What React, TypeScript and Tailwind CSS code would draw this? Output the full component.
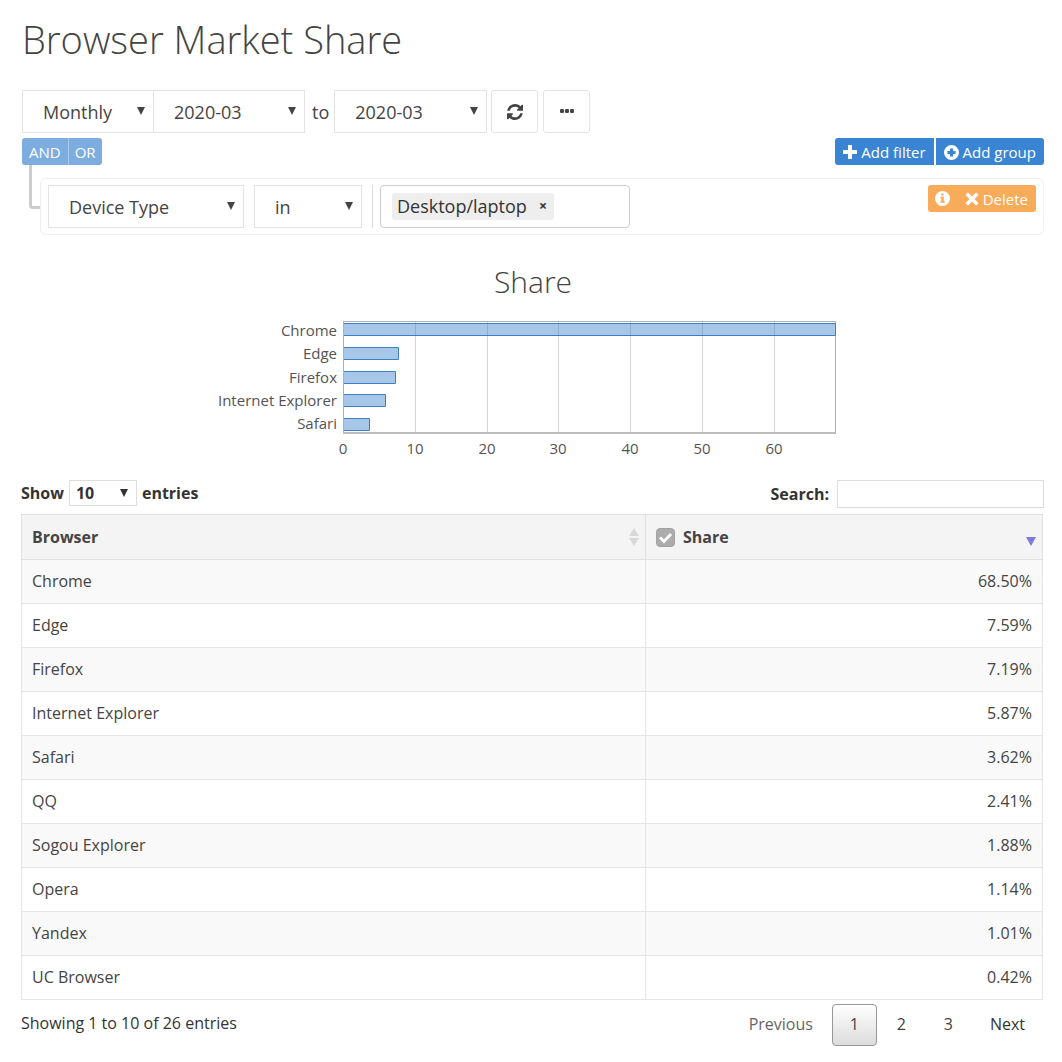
import { useState, type ReactNode } from 'react';

interface BrowserRow {
  name: string;
  share: number;
}

const ROWS: BrowserRow[] = [
  { name: 'Chrome', share: 68.5 },
  { name: 'Edge', share: 7.59 },
  { name: 'Firefox', share: 7.19 },
  { name: 'Internet Explorer', share: 5.87 },
  { name: 'Safari', share: 3.62 },
  { name: 'QQ', share: 2.41 },
  { name: 'Sogou Explorer', share: 1.88 },
  { name: 'Opera', share: 1.14 },
  { name: 'Yandex', share: 1.01 },
  { name: 'UC Browser', share: 0.42 },
];

function RefreshIcon() {
  return (
    <svg viewBox="0 0 1536 1536" className="size-4 fill-current" aria-hidden="true">
      <path d="M1511 928q0 5-1 7-64 268-268 434.5t-478 166.5q-146 0-282.5-55t-243.5-157l-129 129q-19 19-45 19t-45-19-19-45v-448q0-26 19-45t45-19h448q26 0 45 19t19 45-19 45l-137 137q71 66 161 102t187 36q134 0 250-65t186-179q11-17 53-117 8-23 30-23h192q13 0 22.5 9.5t9.5 22.5zm25-800v448q0 26-19 45t-45 19h-448q-26 0-45-19t-19-45 19-45l138-138q-148-137-349-137-134 0-250 65t-186 179q-11 17-53 117-8 23-30 23h-199q-13 0-22.5-9.5t-9.5-22.5v-7q65-268 270-434.5t480-166.5q146 0 284 55.5t245 156.5l130-129q19-19 45-19t45 19 19 45z" />
    </svg>
  );
}

function DotsIcon() {
  return (
    <svg viewBox="0 0 14 6" className="h-1.5 w-3.5 fill-current" aria-hidden="true">
      <rect x="0" y="0" width="4" height="4" rx="1.2" />
      <rect x="5" y="0" width="4" height="4" rx="1.2" />
      <rect x="10" y="0" width="4" height="4" rx="1.2" />
    </svg>
  );
}

function PlusIcon() {
  return (
    <svg viewBox="0 0 14 14" className="size-3.5 fill-current" aria-hidden="true">
      <path d="M5.5 0h3q.5 0 .5.5V5h4.500q.5 0 .5.5v3q0 .5-.5.5H9v4.500q0 .5-.5.5h-3q-.5 0-.5-.5V9H.5Q0 9 0 8.500v-3Q0 5 .5 5H5V.5Q5 0 5.500 0z" />
    </svg>
  );
}

function PlusCircleIcon() {
  return (
    <svg viewBox="0 0 15 15" className="size-[15px] fill-current" aria-hidden="true">
      <path
        fillRule="evenodd"
        d="M7.500 0a7.500 7.500 0 1 1 0 15a7.500 7.500 0 0 1 0-15zM6 3.500V6H3.500v3H6v2.500h3V9h2.500V6H9V3.500z"
      />
    </svg>
  );
}

function InfoIcon() {
  return (
    <svg viewBox="0 0 15 15" className="size-[15px] fill-current" aria-hidden="true">
      <path
        fillRule="evenodd"
        d="M7.500 0a7.500 7.500 0 1 1 0 15a7.500 7.500 0 0 1 0-15zM6.200 2.500v2h2.400v-2zM5.200 5.800v1h1v3.700h-1v1.300h4.600v-1.300h-1V5.800z"
      />
    </svg>
  );
}

function CrossIcon() {
  return (
    <svg viewBox="0 0 14 14" className="size-3.5 fill-current" aria-hidden="true">
      <path d="M3.300.8 7 4.500 10.700.8q.4-.4.800 0l1.700 1.700q.4.400 0 .8L9.500 7l3.700 3.700q.4.400 0 .8l-1.700 1.700q-.4.400-.8 0L7 9.500l-3.700 3.700q-.4.400-.8 0L.8 11.500q-.4-.4 0-.8L4.500 7 .8 3.300q-.4-.4 0-.8L2.500.8q.4-.4.800 0z" />
    </svg>
  );
}

function SelectBox({
  label,
  value,
  className,
}: {
  label: string;
  value: string;
  className: string;
}) {
  return (
    <div className={`relative h-[43px] ${className}`}>
      <select
        aria-label={label}
        defaultValue={value}
        className="h-full w-full appearance-none border border-[#e3e3e3] bg-white pl-5 pr-6 text-lg text-[#444]"
      >
        <option>{value}</option>
      </select>
      <svg
        viewBox="0 0 8 8"
        className="pointer-events-none absolute right-[9px] top-[17px] size-2 fill-[#444]"
        aria-hidden="true"
      >
        <path d="M0 0h8L4 8z" />
      </svg>
    </div>
  );
}

function IconButton({ label, children }: { label: string; children: ReactNode }) {
  return (
    <button
      type="button"
      aria-label={label}
      className="flex h-[43px] w-[47px] items-center justify-center rounded-[3px] border border-[#e3e3e3] bg-white text-[#444]"
    >
      {children}
    </button>
  );
}

// Plot geometry in svg units, axis starts at PLOT_X
const PLOT_X = 123;
const PLOT_W = 492;
const PLOT_H = 111;
const MAX = 68.5;
const TICKS = [0, 10, 20, 30, 40, 50, 60];

function ShareChart() {
  const scale = (v: number) => PLOT_X + Math.round((v / MAX) * PLOT_W);

  return (
    <svg
      viewBox="0 0 626 144"
      className="h-36 w-[626px] max-w-full overflow-visible"
      role="img"
      aria-label="Share by browser"
    >
      {TICKS.slice(1).map((t) => (
        <rect key={t} x={scale(t)} y={2} width={1} height={PLOT_H} fill="#d4d4d4" />
      ))}
      <rect x={PLOT_X + 0.5} y={1.5} width={PLOT_W} height={PLOT_H} fill="none" stroke="#b0b0b0" />
      <rect x={PLOT_X} y={112} width={PLOT_W + 1} height={2} fill="#bdbdbd" />
      {ROWS.slice(0, 5).map((row, i) => {
        const y = Math.round(4.4 + i * 23.6);
        const right = scale(row.share);
        return (
          <g key={row.name}>
            <rect x={PLOT_X + 1} y={y} width={right - PLOT_X} height={11} fill="#3b83cd" fillOpacity={0.45} />
            <path
              d={`M${PLOT_X + 1} ${y - 0.5}H${right + 0.5}V${y + 11.5}H${PLOT_X + 1}`}
              fill="none"
              stroke="#3f80c4"
              strokeWidth={1}
            />
            <text x={117} y={16 + Math.round(i * 23.25)} textAnchor="end" fontSize={15} fill="#545454">
              {row.name}
            </text>
          </g>
        );
      })}
      {TICKS.map((t) => (
        <text key={t} x={scale(t)} y={134} textAnchor="middle" fontSize={15} fill="#545454">
          {t}
        </text>
      ))}
    </svg>
  );
}

export default function App() {
  const [page, setPage] = useState(1);

  return (
    <main className="min-h-screen bg-white pl-[22px] pr-[18px] pt-3 font-['Open_Sans',sans-serif] text-base text-[#444]">
      <h1 className="text-[38px] font-light leading-[54px]">Browser Market Share</h1>

      {/* Period */}
      <div className="mt-6 flex flex-wrap items-center">
        <SelectBox label="Period" value="Monthly" className="w-[132px]" />
        <SelectBox label="From" value="2020-03" className="-ml-px w-[152px]" />
        <span className="ml-[7px] mr-[5px] text-lg">to</span>
        <SelectBox label="To" value="2020-03" className="w-[153px]" />
        <div className="ml-1 flex gap-[5px]">
          <IconButton label="Refresh">
            <RefreshIcon />
          </IconButton>
          <IconButton label="More">
            <DotsIcon />
          </IconButton>
        </div>
      </div>

      {/* Filter builder */}
      <div className="mt-[5px] flex items-start justify-between">
        <div className="flex h-[27px] text-[15px] text-white">
          <button type="button" className="rounded-l-[3px] border-r border-[#a9cbec] bg-[#7dade0] px-[7px] pt-px">
            AND
          </button>
          <button type="button" className="rounded-r-[3px] bg-[#7dade0] px-1.5 pt-px">
            OR
          </button>
        </div>
        <div className="flex h-[27px] gap-0.5 text-[15px] text-white">
          <button type="button" className="flex items-center gap-1 rounded-l-[3px] bg-[#3a85d3] px-2 pt-px">
            <PlusIcon />
            Add filter
          </button>
          <button type="button" className="flex items-center gap-1 rounded-r-[3px] bg-[#3a85d3] px-2 pt-px">
            <PlusCircleIcon />
            Add group
          </button>
        </div>
      </div>
      <div className="flex items-start pl-[7px]">
        <div className="h-11 w-[11px] rounded-bl border-b-[3px] border-l-[3px] border-[#ccc]" />
        <div className="mt-[13px] flex flex-1 items-start rounded-md border border-[#eee] px-[7px] py-1.5">
          <SelectBox label="Field" value="Device Type" className="w-[196px]" />
          <SelectBox label="Operator" value="in" className="ml-2.5 w-[108px]" />
          <div className="ml-2.5 flex h-[43px] border-l border-[#ddd] pl-[7px]">
            <div className="flex w-[250px] items-center rounded border border-[#ccc] pl-[11px]">
              <span className="flex h-[27px] items-center gap-2.5 rounded-[3px] bg-[#eee] px-[5px] pb-px text-lg text-[#333]">
                Desktop/laptop
                <button
                  type="button"
                  aria-label="Remove Desktop/laptop"
                  className="flex w-3 items-center justify-center text-sm font-bold"
                >
                  ×
                </button>
              </span>
              <input aria-label="Filter value" className="min-w-0 flex-1 bg-transparent outline-none" />
            </div>
          </div>
          <div className="ml-auto flex h-[27px] text-[15px] text-white">
            <button type="button" aria-label="Info" className="rounded-l-[3px] bg-[#f8ab59] px-[7px]">
              <InfoIcon />
            </button>
            <button type="button" className="flex items-center gap-1 rounded-r-[3px] bg-[#f8ab59] px-2 pt-px">
              <CrossIcon />
              Delete
            </button>
          </div>
        </div>
      </div>

      {/* Chart */}
      <section className="mt-6 flex flex-col items-center">
        <h2 className="text-[30px] font-light leading-[46px]">Share</h2>
        <div className="mt-[15px]">
          <ShareChart />
        </div>
      </section>

      {/* Table */}
      <section className="-ml-px mt-4">
        <div className="flex items-start justify-between font-bold text-[#333]">
          <label className="flex h-[26px] items-center gap-[5px]">
            Show
            <span className="relative block h-[26px] w-[68px]">
              <select
                defaultValue="10"
                className="h-full w-full appearance-none border border-[#ddd] bg-white pl-1.5 font-bold"
              >
                <option>10</option>
                <option>25</option>
              </select>
              <svg
                viewBox="0 0 8 8"
                className="pointer-events-none absolute right-[9px] top-[9px] size-2 fill-[#333]"
                aria-hidden="true"
              >
                <path d="M0 0h8L4 8z" />
              </svg>
            </span>
            entries
          </label>
          <label className="flex items-center gap-2">
            Search:
            <input type="search" className="h-7 w-[207px] border border-[#ddd] bg-white px-2 font-normal" />
          </label>
        </div>

        <div className="mr-px mt-1.5">
          <table className="w-full table-fixed border-collapse">
            <thead>
              <tr className="h-[45px] bg-[#f4f4f4] text-left">
                <th className="w-11/18 border border-[#e0e0e0] px-2.5 font-bold">
                  <div className="-mr-1 flex items-center justify-between">
                    Browser
                    <svg viewBox="0 0 10 18" className="h-[18px] w-2.5 fill-[#d8d8d8]" aria-hidden="true">
                      <path d="M5 0l5 8H0zM0 10h10l-5 8z" />
                    </svg>
                  </div>
                </th>
                <th className="border border-[#e0e0e0] px-2.5 font-bold">
                  <div className="-mr-1 flex items-center justify-between">
                    <label className="flex items-center gap-2">
                      <span className="relative block size-[19px]">
                        <input
                          type="checkbox"
                          defaultChecked
                          className="block size-[19px] appearance-none rounded border border-[#a2a2a2] bg-[#acacac]"
                        />
                        <svg
                          viewBox="0 0 19 19"
                          className="pointer-events-none absolute inset-0 size-[19px]"
                          aria-hidden="true"
                        >
                          <path d="M4 9.500l4 4 7-7.500" fill="none" stroke="#fff" strokeWidth="2.800" />
                        </svg>
                      </span>
                      Share
                    </label>
                    <svg viewBox="0 0 10 18" className="h-[18px] w-2.5 fill-[#7b7bd8]" aria-hidden="true">
                      <path d="M0 9h10l-5 9z" />
                    </svg>
                  </div>
                </th>
              </tr>
            </thead>
            <tbody>
              {ROWS.map((row) => (
                <tr key={row.name} className="h-11 odd:bg-[#f9f9f9]">
                  <td className="border border-[#e5e5e5] px-2.5 pb-0.5">{row.name}</td>
                  <td className="border border-[#e5e5e5] px-2.5 pb-0.5 text-right">{row.share.toFixed(2)}%</td>
                </tr>
              ))}
            </tbody>
          </table>
        </div>

        <div className="mr-0.5 mt-1 flex items-start justify-between pb-4">
          <p className="mt-[7px] text-[#333]">Showing 1 to 10 of 26 entries</p>
          <nav className="flex h-[42px] gap-0.5" aria-label="Pagination">
            <button type="button" className="px-[17px] pb-0.5 text-[#666]">
              Previous
            </button>
            {[1, 2, 3].map((n) => (
              <button
                key={n}
                type="button"
                onClick={() => setPage(n)}
                className={
                  n === page
                    ? 'w-[45px] rounded-sm border border-[#979797] bg-linear-to-b from-white to-[#dcdcdc] pb-0.5'
                    : 'w-[45px] rounded-sm border border-transparent pb-0.5'
                }
              >
                {n}
              </button>
            ))}
            <button type="button" className="px-[17px] pb-0.5 text-[#333]">
              Next
            </button>
          </nav>
        </div>
      </section>
    </main>
  );
}
